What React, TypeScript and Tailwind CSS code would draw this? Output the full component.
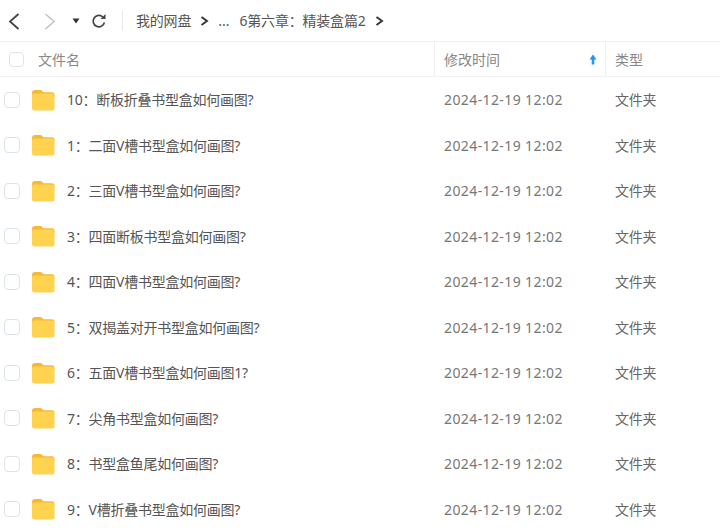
import React from 'react';

const colon = '\uFF1A';

const files = [
  `10${colon}断板折叠书型盒如何画图?`,
  `1${colon}二面V槽书型盒如何画图?`,
  `2${colon}三面V槽书型盒如何画图?`,
  `3${colon}四面断板书型盒如何画图?`,
  `4${colon}四面V槽书型盒如何画图?`,
  `5${colon}双揭盖对开书型盒如何画图?`,
  `6${colon}五面V槽书型盒如何画图1?`,
  `7${colon}尖角书型盒如何画图?`,
  `8${colon}书型盒鱼尾如何画图?`,
  `9${colon}V槽折叠书型盒如何画图?`,
];

const Folder = () => (
  <svg width="24" height="22" viewBox="0 0 24 22" className="shrink-0">
    <path d="M1 4 Q1 1 4 1 H9 Q10.5 1 11.5 2.2 L12.5 3.2 H21 Q23.5 3.2 23.5 6 V8 H1 Z" fill="#f5b93a" />
    <path d="M1 6.5 Q1 4.6 3 4.6 H21.5 Q23.5 4.6 23.5 6.6 V19 Q23.5 21.5 21 21.5 H3.5 Q1 21.5 1 19 Z" fill="#ffd24f" />
  </svg>
);

const Chevron = () => (
  <svg width="9" height="10" viewBox="0 0 9 10" className="shrink-0">
    <path d="M1.5 1 L7 5 L1.5 9" fill="none" stroke="#333" strokeWidth="1.9" />
  </svg>
);

export default function App() {
  return (
    <div className="w-[720px] h-[532px] overflow-hidden bg-white font-['Noto_Sans','Noto_Sans_CJK_SC',sans-serif]">
      <div className="h-[42px] flex items-center border-b border-[#f0f0f0] text-[14px] text-[#555]">
        <svg width="14" height="18" viewBox="0 0 14 18" className="ml-[7px] shrink-0">
          <path d="M11.5 2 L3 9.5 L11.5 17" fill="none" stroke="#444" strokeWidth="1.8" />
        </svg>
        <svg width="14" height="18" viewBox="0 0 14 18" className="ml-[22px] shrink-0">
          <path d="M2.5 2 L11 9.5 L2.5 17" fill="none" stroke="#c4c4c4" strokeWidth="1.6" />
        </svg>
        <svg width="8" height="6" viewBox="0 0 8 6" className="ml-[15px] shrink-0">
          <path d="M0.5 0.5 H7.5 L4 5.5 Z" fill="#333" />
        </svg>
        <svg width="16" height="16" viewBox="0 0 16 16" className="ml-[11px] shrink-0">
          <path d="M13.4 9.5 A5.7 5.7 0 1 1 11.8 4" fill="none" stroke="#444" strokeWidth="1.7" />
          <path d="M9.5 6 H14.5 V1 Z" fill="#444" />
        </svg>
        <div className="ml-[15px] w-px h-[20px] bg-[#e6e6e6]" />
        <span className="ml-[13px] tracking-[-0.2px]">我的网盘</span>
        <span className="ml-[9px]"><Chevron /></span>
        <span className="ml-[9px]">...</span>
        <span className="ml-[10px] tracking-[-0.2px]">6第六章{colon}精装盒篇2</span>
        <span className="ml-[9px]"><Chevron /></span>
      </div>

      <div className="h-[35px] flex items-center border-b border-[#f3f3f3] text-[14px] text-[#888]">
        <div className="w-[435px] h-full flex items-center border-r border-[#efefef]">
          <div className="ml-[9px] w-[15px] h-[15px] rounded-[4px] border border-[#e3e3e3]" />
          <span className="ml-[14px]">文件名</span>
        </div>
        <div className="w-[171px] h-full flex items-center justify-between border-r border-[#efefef] pl-[9px] pr-[8px]">
          <span>修改时间</span>
          <svg width="8" height="11" viewBox="0 0 8 11">
            <path d="M4 0.5 L7.5 5.5 H5.3 V10.5 H2.7 V5.5 H0.5 Z" fill="#2196f3" />
          </svg>
        </div>
        <span className="ml-[9px]">类型</span>
      </div>

      {files.map((name) => (
        <div key={name} className="h-[45.5px] flex items-center text-[14px] text-[#555]">
          <div className="ml-[4px] w-[16px] h-[16px] rounded-[4px] border border-[#dde3ea] shrink-0" />
          <div className="ml-[11px]"><Folder /></div>
          <span className="ml-[12px] w-[377px] truncate tracking-[-0.25px]">{name}</span>
          <span className="w-[171px] text-[#777] tracking-[0.4px]">2024-12-19 12:02</span>
          <span className="text-[#666] tracking-[-0.2px]">文件夹</span>
        </div>
      ))}
    </div>
  );
}
